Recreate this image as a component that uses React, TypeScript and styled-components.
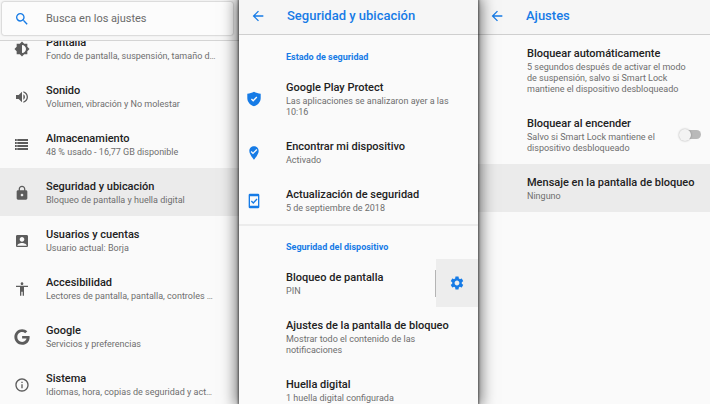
import React from "react";
import styled, { createGlobalStyle, css } from "styled-components";
import {
  MdArrowBack,
  MdSearch,
  MdLock,
  MdAccountBox,
  MdAccessibility,
  MdInfoOutline,
  MdVolumeUp,
  MdBrightness6,
  MdWhereToVote,
  MdSettings,
} from "react-icons/md";
import { FaGoogle } from "react-icons/fa";

const BLUE = "#167be6";

const GlobalStyle = createGlobalStyle`
  * { box-sizing: border-box; }
  html, body, #root { height: 100%; }
  body {
    margin: 0;
    overflow: hidden;
    background: #fafafa;
    font-family: Roboto, "Liberation Sans", sans-serif;
    color: #222;
  }
  h1, h2, p, ul { margin: 0; padding: 0; }
  button { font: inherit; color: inherit; border: 0; padding: 0; background: none; cursor: pointer; }
`;

const Screens = styled.main`
  display: grid;
  grid-template-columns: 239fr 239fr 232fr;
  height: 100vh;
  overflow: hidden;
`;

const Panel = styled.section<{ $raised?: boolean }>`
  display: flex;
  flex-direction: column;
  min-width: 0;
  min-height: 0;
  background: #fafafa;
  ${(p) =>
    p.$raised &&
    css`
      z-index: 1;
      box-shadow: 0 0 2px 1px rgba(0, 0, 0, 0.5), 0 0 14px 3px rgba(0, 0, 0, 0.55);
    `}
`;

const SearchArea = styled.header`
  flex: none;
  height: 41px;
  padding: 2px 6px 5px 2px;
  background: #f7f7f7;
  border-bottom: 1px solid #d4d4d4;
`;

const SearchBox = styled.label`
  display: flex;
  align-items: center;
  height: 33px;
  padding-left: 12px;
  gap: 16px;
  color: ${BLUE};
  background: #fcfcfc;
  border-radius: 2px;
  box-shadow: 0 0 2px rgba(0, 0, 0, 0.4);
`;

const SearchInput = styled.input`
  flex: 1;
  min-width: 0;
  padding: 0;
  border: 0;
  outline: 0;
  background: none;
  font: 400 11px/16px Roboto, sans-serif;
  color: #6b6b6b;
  &::placeholder { color: #6b6b6b; opacity: 1; }
`;

const Scroller = styled.div`
  flex: 1;
  min-height: 0;
  overflow: hidden;
`;

const List = styled.ul<{ $scrolled?: boolean }>`
  list-style: none;
  margin-top: ${(p) => (p.$scrolled ? "-17px" : "0")};
`;

const Row = styled.li<{ $active?: boolean }>`
  display: flex;
  background: ${(p) => (p.$active ? "#ebebeb" : "transparent")};
`;

const RowButton = styled.button<{ $indent?: boolean }>`
  display: flex;
  align-items: center;
  flex: 1;
  min-width: 0;
  text-align: left;
  padding: ${(p) => (p.$indent ? "11px 20px 10px 49px" : "11px 12px 10px 0")};
`;

const IconSlot = styled.span<{ $wide?: boolean }>`
  flex: none;
  display: flex;
  padding-left: ${(p) => (p.$wide ? "7px" : "14px")};
  width: ${(p) => (p.$wide ? "47px" : "46px")};
  color: ${(p) => (p.$wide ? BLUE : "#5c5c5c")};
`;

const RowText = styled.span`
  display: block;
  flex: 1;
  min-width: 0;
`;

const Title = styled.span`
  display: block;
  font-size: 11px;
  line-height: 16px;
  font-weight: 500;
  white-space: nowrap;
`;

const Summary = styled.span<{ $clip?: boolean }>`
  display: block;
  font-size: 9px;
  line-height: 11px;
  color: #6e6e6e;
  white-space: ${(p) => (p.$clip ? "nowrap" : "normal")};
`;

const Bar = styled.header`
  flex: none;
  display: flex;
  align-items: center;
  height: 35px;
  padding: 0 12px 2px 11px;
  gap: 21px;
  color: ${BLUE};
  background: #f6f6f6;
  border-bottom: 1px solid #cfcfcf;
`;

const BackButton = styled.button`
  display: flex;
`;

const BarTitle = styled.h1`
  font-size: 13px;
  line-height: 18px;
  font-weight: 500;
  white-space: nowrap;
`;

const GroupTitle = styled.h2<{ $ruled?: boolean }>`
  padding: ${(p) => (p.$ruled ? "17px" : "16px")} 12px 6px 47px;
  font-size: 9px;
  line-height: 12px;
  font-weight: 700;
  color: ${BLUE};
  box-shadow: ${(p) => (p.$ruled ? "inset 0 2px 0 #ececec" : "none")};
`;

const GearButton = styled.button`
  flex: none;
  display: flex;
  align-items: center;
  justify-content: center;
  width: 42px;
  color: ${BLUE};
  background: #ededed;
`;

const Separator = styled.span`
  flex: none;
  align-self: center;
  width: 1px;
  height: 27px;
  background: #b4b4b4;
`;

const Switch = styled.input`
  appearance: none;
  flex: none;
  align-self: center;
  display: flex;
  align-items: center;
  width: 22px;
  height: 9px;
  margin: 0 9px 0 0;
  border-radius: 5px;
  background: linear-gradient(90deg, transparent 5px, #b9b9b9 5px);
  &::before {
    content: "";
    width: 12px;
    height: 12px;
    flex: none;
    border-radius: 50%;
    background: #f3f3f3;
    box-shadow: 0 0 2px rgba(0, 0, 0, 0.35);
  }
`;

const SwitchLabel = styled.label`
  display: block;
  flex: 1;
  min-width: 0;
  padding: 11px 12px 10px 49px;
`;

const StorageIcon = () => (
  <svg width="16" height="16" viewBox="0 0 16 16" fill="currentColor" aria-hidden="true">
    {[2, 5, 8, 11].map((y) => (
      <path key={y} fillRule="evenodd" d={`M1 ${y}h13v2H1zM2.500 ${y + 0.5}v1h1v-1z`} />
    ))}
  </svg>
);

const ShieldCheckIcon = () => (
  <svg width="16" height="16" viewBox="0 0 16 16" aria-hidden="true">
    <path
      fill="currentColor"
      d="M8 .8C10 2 12.300 2.600 14.700 2.700V7.200C14.500 11 12 13.800 8 15.300C4 13.800 1.500 11 1.300 7.200V2.700C3.700 2.600 6 2 8 .8z"
    />
    <path d="m5.400 8 1.800 1.800L10.800 6" fill="none" stroke="#fafafa" strokeWidth="1.4" />
  </svg>
);

const PhoneCheckIcon = () => (
  <svg width="16" height="16" viewBox="0 0 24 24" aria-hidden="true">
    <path
      fill="currentColor"
      fillRule="evenodd"
      d="M6 1h12a2 2 0 0 1 2 2v18a2 2 0 0 1-2 2H6a2 2 0 0 1-2-2V3a2 2 0 0 1 2-2zm0 4v14h12V5z"
    />
    <path d="m8 12 3 3 5.500-6" fill="none" stroke="currentColor" strokeWidth="2" />
  </svg>
);

const settings = [
  { icon: <MdBrightness6 size={16} />, title: "Pantalla", text: "Fondo de pantalla, suspensión, tamaño d…" },
  { icon: <MdVolumeUp size={16} />, title: "Sonido", text: "Volumen, vibración y No molestar" },
  { icon: <StorageIcon />, title: "Almacenamiento", text: "48 % usado - 16,77 GB disponible" },
  { icon: <MdLock size={16} />, title: "Seguridad y ubicación", text: "Bloqueo de pantalla y huella digital", active: true },
  { icon: <MdAccountBox size={16} />, title: "Usuarios y cuentas", text: "Usuario actual: Borja" },
  { icon: <MdAccessibility size={16} />, title: "Accesibilidad", text: "Lectores de pantalla, pantalla, controles …" },
  { icon: <FaGoogle size={16} />, title: "Google", text: "Servicios y preferencias" },
  { icon: <MdInfoOutline size={16} />, title: "Sistema", text: "Idiomas, hora, copias de seguridad y act…" },
];

const security = [
  { icon: <ShieldCheckIcon />, title: "Google Play Protect", text: "Las aplicaciones se analizaron ayer a las 10:16" },
  { icon: <MdWhereToVote size={16} />, title: "Encontrar mi dispositivo", text: "Activado" },
  { icon: <PhoneCheckIcon />, title: "Actualización de seguridad", text: "5 de septiembre de 2018" },
];

const device = [
  { title: "Bloqueo de pantalla", text: "PIN", gear: true },
  { title: "Ajustes de la pantalla de bloqueo", text: "Mostrar todo el contenido de las notificaciones" },
  { title: "Huella digital", text: "1 huella digital configurada" },
];

function TitleBar({ children }: { children: React.ReactNode }) {
  return (
    <Bar>
      <BackButton aria-label="Atrás">
        <MdArrowBack size={16} />
      </BackButton>
      <BarTitle>{children}</BarTitle>
    </Bar>
  );
}

export default function App() {
  return (
    <>
      <GlobalStyle />
      <Screens>
        <Panel>
          <SearchArea>
            <SearchBox>
              <MdSearch size={16} />
              <SearchInput type="search" placeholder="Busca en los ajustes" aria-label="Busca en los ajustes" />
            </SearchBox>
          </SearchArea>
          <Scroller>
            <List $scrolled>
              {settings.map((s) => (
                <Row key={s.title} $active={s.active}>
                  <RowButton>
                    <IconSlot>{s.icon}</IconSlot>
                    <RowText>
                      <Title>{s.title}</Title>
                      <Summary $clip>{s.text}</Summary>
                    </RowText>
                  </RowButton>
                </Row>
              ))}
            </List>
          </Scroller>
        </Panel>

        <Panel $raised>
          <TitleBar>Seguridad y ubicación</TitleBar>
          <Scroller>
            <GroupTitle>Estado de seguridad</GroupTitle>
            <List>
              {security.map((s) => (
                <Row key={s.title}>
                  <RowButton>
                    <IconSlot $wide>{s.icon}</IconSlot>
                    <RowText>
                      <Title>{s.title}</Title>
                      <Summary>{s.text}</Summary>
                    </RowText>
                  </RowButton>
                </Row>
              ))}
            </List>
            <GroupTitle $ruled>Seguridad del dispositivo</GroupTitle>
            <List>
              {device.map((s) => (
                <Row key={s.title}>
                  <RowButton>
                    <IconSlot $wide />
                    <RowText>
                      <Title>{s.title}</Title>
                      <Summary>{s.text}</Summary>
                    </RowText>
                  </RowButton>
                  {s.gear && (
                    <>
                      <Separator />
                      <GearButton aria-label="Configurar bloqueo de pantalla">
                        <MdSettings size={16} />
                      </GearButton>
                    </>
                  )}
                </Row>
              ))}
            </List>
          </Scroller>
        </Panel>

        <Panel>
          <TitleBar>Ajustes</TitleBar>
          <Scroller>
            <List>
              <Row>
                <RowButton $indent>
                  <RowText>
                    <Title>Bloquear automáticamente</Title>
                    <Summary>
                      5 segundos después de activar el modo de suspensión, salvo si Smart Lock mantiene el dispositivo
                      desbloqueado
                    </Summary>
                  </RowText>
                </RowButton>
              </Row>
              <Row>
                <SwitchLabel htmlFor="lock-on-power">
                  <Title>Bloquear al encender</Title>
                  <Summary>Salvo si Smart Lock mantiene el dispositivo desbloqueado</Summary>
                </SwitchLabel>
                <Switch id="lock-on-power" type="checkbox" />
              </Row>
              <Row $active>
                <RowButton $indent>
                  <RowText>
                    <Title>Mensaje en la pantalla de bloqueo</Title>
                    <Summary>Ninguno</Summary>
                  </RowText>
                </RowButton>
              </Row>
            </List>
          </Scroller>
        </Panel>
      </Screens>
    </>
  );
}
